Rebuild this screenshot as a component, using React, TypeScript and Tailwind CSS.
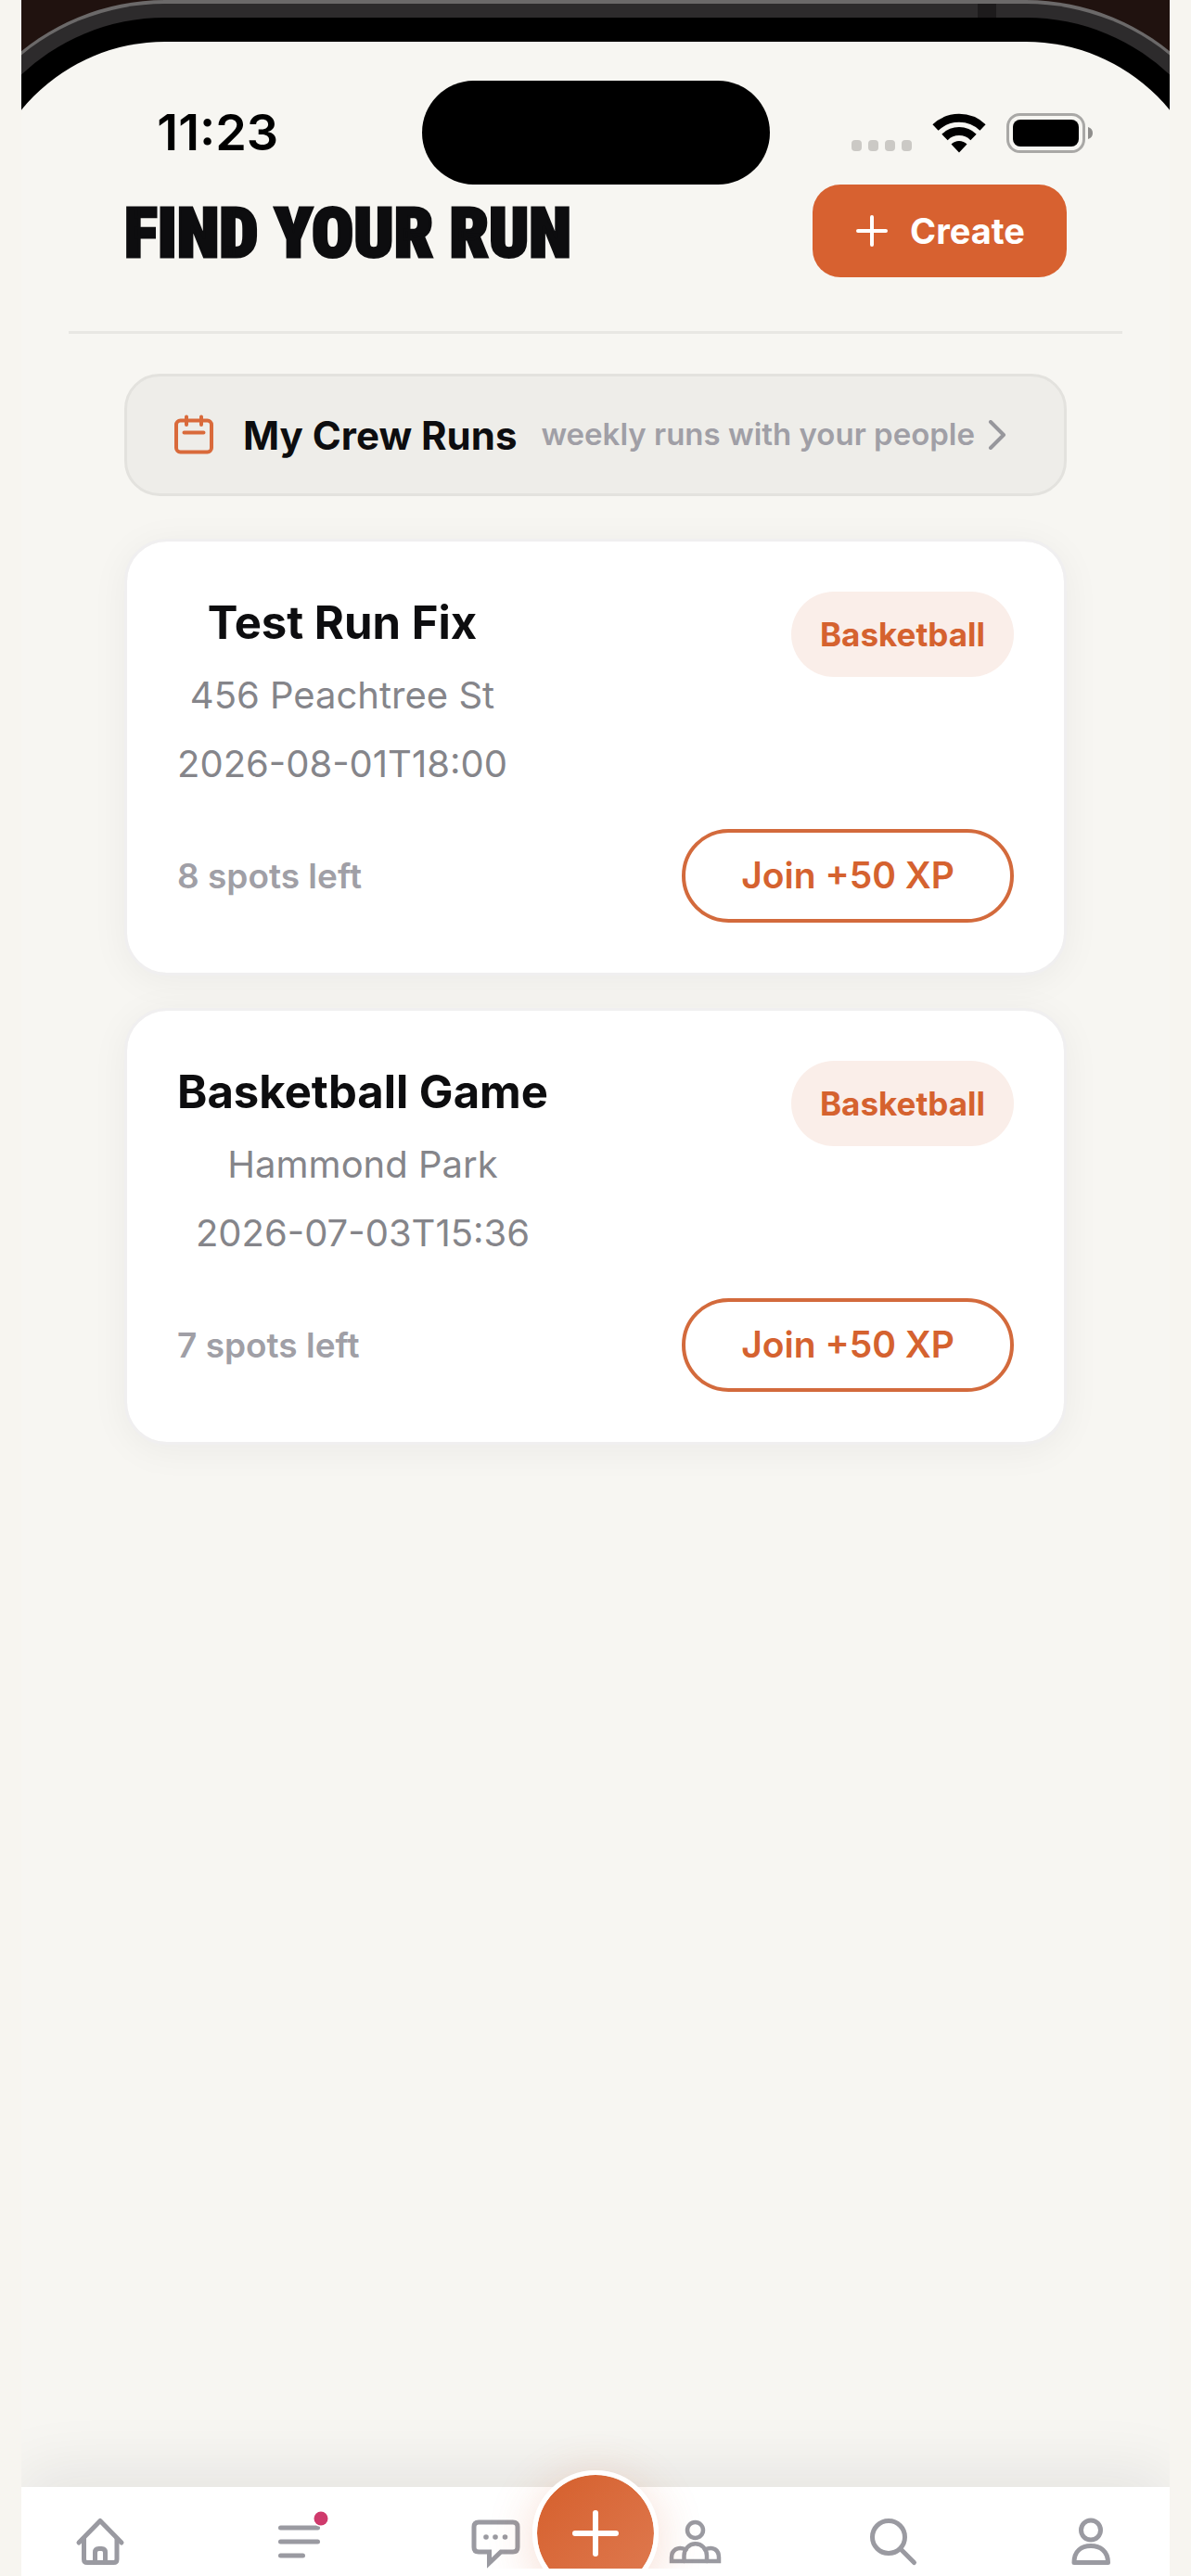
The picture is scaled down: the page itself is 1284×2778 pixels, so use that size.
import type { ReactNode } from 'react';

type Run = {
  id: number;
  title: string;
  location: string;
  startsAt: string;
  sport: string;
  spotsLeft: number;
  xp: number;
};

const RUNS: Run[] = [
  {
    id: 1,
    title: 'Test Run Fix',
    location: '456 Peachtree St',
    startsAt: '2026-08-01T18:00',
    sport: 'Basketball',
    spotsLeft: 8,
    xp: 50,
  },
  {
    id: 2,
    title: 'Basketball Game',
    location: 'Hammond Park',
    startsAt: '2026-07-03T15:36',
    sport: 'Basketball',
    spotsLeft: 7,
    xp: 50,
  },
];

function StatusBar() {
  return (
    <div className="grid grid-cols-[1fr_375px_1fr] items-center pt-[42px] text-black">
      <div className="pr-2 text-center text-[54px] leading-none font-semibold">11:23</div>
      <div className="h-[112px] rounded-full bg-black" />
      <div className="flex items-end justify-center pl-[6px]">
        <div className="flex gap-[7px] pb-[2px]">
          {[0, 1, 2, 3].map((i) => (
            <span key={i} className="h-3 w-[11px] rounded-[4px] bg-[#cbc9c5]" />
          ))}
        </div>
        <svg className="ml-[22px] h-[43px] w-[58px]" viewBox="0 0 57 43" fill="none" stroke="currentColor" strokeWidth="9">
          <path d="M3 15.500A37 37 0 0 1 54 15.500" />
          <path d="M13 26A22 22 0 0 1 44 26" />
          <path d="M28.500 42.500L20 33.500a12 12 0 0 1 17 0z" fill="currentColor" stroke="none" />
        </svg>
        <svg className="ml-[22px] h-[43px] w-[94px]" viewBox="0 0 94 43" fill="none">
          <rect x="1.500" y="1.500" width="82" height="40" rx="13" stroke="#a9a8a6" strokeWidth="3" />
          <rect x="7" y="7" width="71" height="29" rx="8" fill="#000" />
          <path d="M88 15c3.500 1 5 3.500 5 6.500s-1.500 5.500-5 6.500z" fill="#8f8e8c" />
        </svg>
      </div>
    </div>
  );
}

function RunCard({ run }: { run: Run }) {
  return (
    <article className="rounded-[46px] border-[3px] border-[#f0eff0] bg-white bg-clip-padding p-[54px] shadow-[0_6px_40px_rgba(20,20,40,0.05)]">
      <div className="flex items-start justify-between">
        <div className="text-center">
          <h2 className="text-[49px] leading-[68px] font-bold text-[#0d0d0f]">{run.title}</h2>
          <p className="mt-[14px] text-[40px] leading-[60px] text-[#85858a]">{run.location}</p>
          <p className="mt-[14px] text-[40px] leading-[60px] text-[#85858a]">{run.startsAt}</p>
        </div>
        <span className="rounded-full bg-[#faeee9] px-[31px] py-[22px] text-[35px] leading-[48px] font-bold text-[#d5622f]">
          {run.sport}
        </span>
      </div>
      <div className="mt-[40px] flex items-center justify-between">
        <span className="text-[37px] font-semibold text-[#a09fa6]">{run.spotsLeft} spots left</span>
        <button
          type="button"
          className="h-[101px] rounded-full border-4 border-[#d36a3c] px-[60px] text-[39px] font-semibold text-[#d5622f]"
        >
          Join +{run.xp} XP
        </button>
      </div>
    </article>
  );
}

function NavItem({ label, children }: { label: string; children: ReactNode }) {
  return (
    <a href="#" aria-label={label} className="block h-[60px] w-[60px] text-[#9a9aa1]">
      <svg
        className="h-full w-full overflow-visible"
        viewBox="0 0 60 60"
        fill="none"
        stroke="currentColor"
        strokeWidth="5"
        strokeLinecap="round"
        strokeLinejoin="round"
      >
        {children}
      </svg>
    </a>
  );
}

function BottomNav() {
  return (
    <nav className="relative flex h-[88px] justify-between bg-white px-[55px] pt-[29px] shadow-[0_-12px_72px_rgba(20,20,30,0.09)]">
      <NavItem label="Home">
        <path d="M7 31L30 7.500L53 31" />
        <path d="M12.500 27V49q0 3.500 3.500 3.500H44.500q3.500 0 3.500-3.500V27" />
        <path d="M24.500 52V41.500q0-4 4-4h3q4 0 4 4V52" />
      </NavItem>
      <NavItem label="Feed">
        <path d="M10.500 15H50.500M10.500 30H50.500M10.500 45H34.500" />
        <circle cx="54" cy="5" r="9" fill="#fff" stroke="none" />
        <circle cx="54" cy="5" r="7.500" fill="#cf3a6c" stroke="none" />
      </NavItem>
      <NavItem label="Messages">
        <path d="M11 9H48q5 0 5 5V36q0 5-5 5H35L22.500 53V41H11q-5 0-5-5V14q0-5 5-5z" strokeLinejoin="miter" />
        <g fill="currentColor" stroke="none">
          <circle cx="19" cy="25" r="2.800" />
          <circle cx="29" cy="25" r="2.800" />
          <circle cx="39.500" cy="25" r="2.800" />
        </g>
      </NavItem>
      <NavItem label="Crew">
        <g strokeWidth="4.500" strokeLinejoin="miter">
          <circle cx="30.500" cy="17.500" r="8.500" />
          <path d="M18.500 51V45a12 12.500 0 0 1 24.500 0V51" />
          <path d="M20.500 38.500C11.500 34.500 5 39 5 47V51H56V47C56 39 50 34.500 41 38.500" />
        </g>
      </NavItem>
      <NavItem label="Search">
        <circle cx="26" cy="25" r="17.500" />
        <path d="M39 38L53.500 52.500" />
      </NavItem>
      <NavItem label="Profile">
        <circle cx="30" cy="17.500" r="10.500" />
        <path d="M12 52.500C12 40 20 34.500 30 34.500S48.500 40 48.500 52.500z" />
      </NavItem>
      <button
        type="button"
        aria-label="Add"
        className="absolute -top-[18px] left-1/2 flex h-[136px] w-[136px] -translate-x-1/2 items-center justify-center rounded-full border-[5px] border-white bg-linear-135 from-[#d55f2b] to-[#df7a50] bg-clip-padding text-white shadow-[0_8px_50px_rgba(214,96,44,0.22)]"
      >
        <svg className="h-[50px] w-[50px]" viewBox="0 0 50 50" stroke="currentColor" strokeWidth="6" strokeLinecap="round">
          <path d="M25 3V47M3 25H47" />
        </svg>
      </button>
    </nav>
  );
}

function App() {
  return (
    <div className="flex min-h-screen flex-col bg-[#f7f5f0] px-[23px] font-['Inter','Liberation_Sans',sans-serif]">
      {/* The device is wider than the view, so its sides are clipped */}
      <div className="flex flex-1 flex-col overflow-hidden bg-[#20120f]">
        <div className="relative -mx-[90px] flex flex-1 flex-col rounded-t-[245px] border-x-2 border-t-4 border-[#6b6969] bg-[#2d2b2c] px-[17px] pt-[15px]">
          <span className="absolute top-0 right-[275px] h-[15px] w-5 bg-[#1d1b1c]" />
          <div className="relative flex flex-1 flex-col rounded-t-[226px] bg-black px-[26px] pt-[26px]">
            <div className="flex flex-1 flex-col rounded-t-[200px] bg-[#f7f6f2] px-[45px]">
              <StatusBar />

              <header className="mx-[51px] flex items-center justify-between border-b-[3px] border-[#e8e7e3] px-[60px] pb-[58px]">
                <h1 className="pt-1 font-['Roboto_Condensed','Open_Sans_Condensed','Roboto',sans-serif] text-[75px] leading-[96px] font-black text-[#0d0d0f] [-webkit-text-stroke:3px_#0d0d0f]">
                  FIND YOUR RUN
                </h1>
                <button
                  type="button"
                  className="flex h-[100px] items-center gap-[22px] rounded-[30px] bg-[#d76130] px-[45px] text-[38px] font-bold text-white"
                >
                  <svg className="h-[38px] w-[38px]" viewBox="0 0 38 38" stroke="currentColor" strokeWidth="4" strokeLinecap="round">
                    <path d="M19 4V34M4 19H34" />
                  </svg>
                  Create
                </button>
              </header>

              <main className="flex flex-1 flex-col px-[111px] pt-[43px]">
                <a
                  href="#"
                  className="flex h-[132px] items-center rounded-[38px] border-[3px] border-[#e3e2de] bg-[#eeede9] px-[51px]"
                >
                  <svg
                    className="h-[42px] w-[42px] shrink-0 overflow-visible text-[#d96a3b]"
                    viewBox="0 0 42 42"
                    fill="none"
                    stroke="currentColor"
                    strokeWidth="4"
                    strokeLinecap="round"
                  >
                    <rect x="2" y="5.500" width="38" height="34" rx="4.500" />
                    <path d="M13 1.500V10M29 1.500V10M10.500 18.500H31.500" />
                  </svg>
                  <span className="ml-[32px] text-[42px] font-bold text-[#0d0d0f]">My Crew Runs</span>
                  <span className="ml-auto text-[33px] font-semibold text-[#a09fa6]">weekly runs with your people</span>
                  <svg
                    className="mr-[11px] ml-[14px] h-[32px] w-[20px] shrink-0 text-[#97979c]"
                    viewBox="0 0 20 32"
                    fill="none"
                    stroke="currentColor"
                    strokeWidth="4"
                    strokeLinecap="round"
                    strokeLinejoin="round"
                  >
                    <path d="M3 2L17 16L3 30" />
                  </svg>
                </a>

                <section className="mt-[46px] flex flex-col gap-[35px]">
                  {RUNS.map((run) => (
                    <RunCard key={run.id} run={run} />
                  ))}
                </section>
              </main>

              <div className="-mx-[45px] px-[45px]">
                <BottomNav />
              </div>
            </div>
          </div>
        </div>
      </div>
      <div className="h-2 bg-white" />
    </div>
  );
}

export default App;
